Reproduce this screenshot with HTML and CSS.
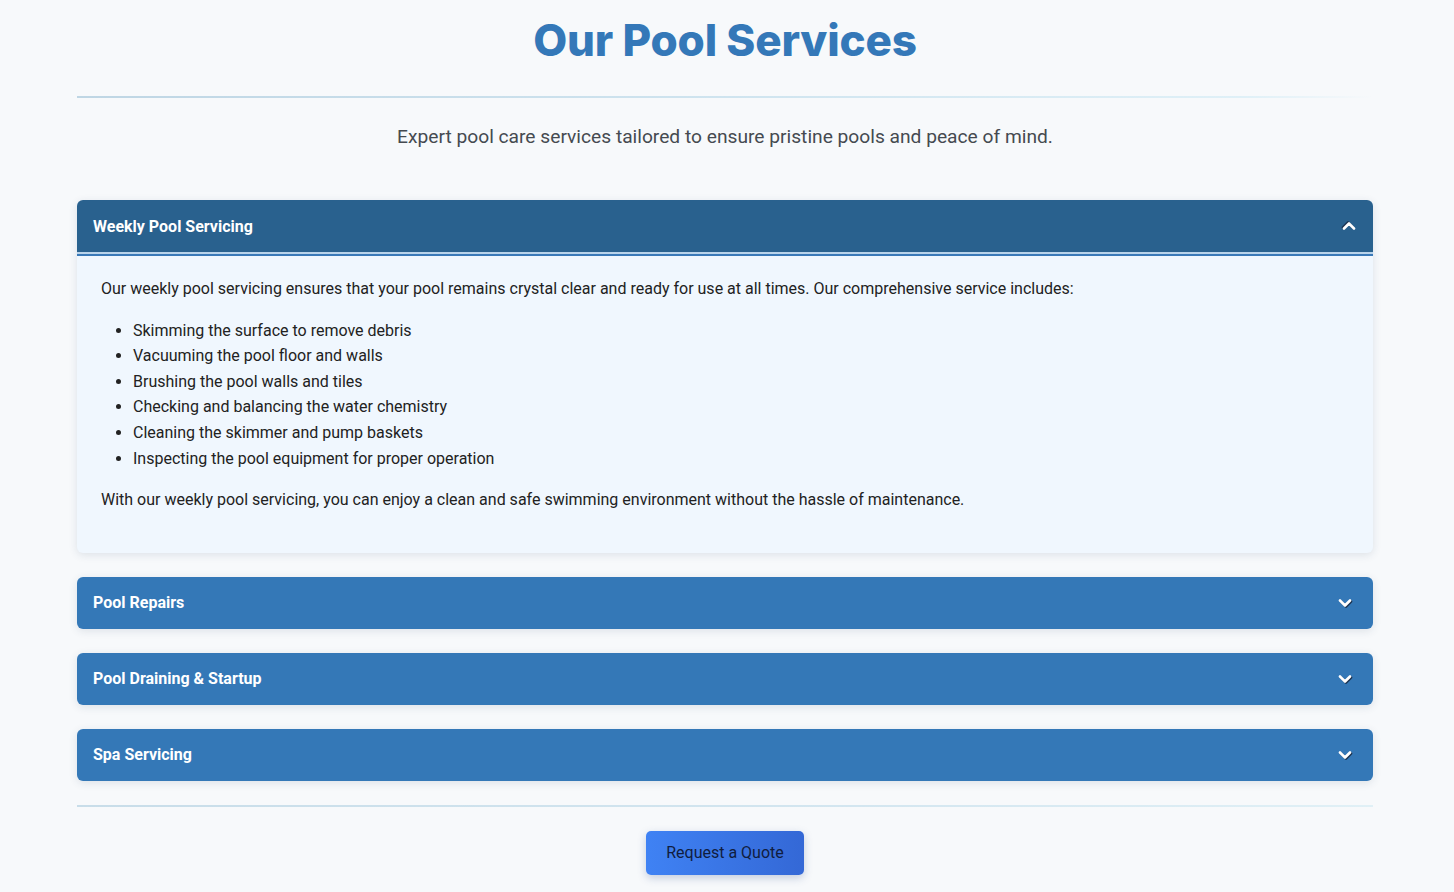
FILE: index.html
```html
<!DOCTYPE html>
<html lang="en">
<head>
<meta charset="utf-8">
<title>Our Pool Services</title>
<link rel="stylesheet" href="styles.css">
</head>
<body>
<main class="services">
  <h1 class="services-title">Our Pool Services</h1>
  <hr class="divider">
  <p class="services-intro">Expert pool care services tailored to ensure pristine pools and peace of mind.</p>

  <div class="accordion">
    <section class="acc-item open">
      <button class="acc-header" type="button">
        <span class="acc-label">Weekly Pool Servicing</span>
        <span class="acc-chevron"><svg viewBox="0 0 16 16" width="16" height="16"><path d="M3 5.5 L8 10.5 L13 5.5" fill="none" stroke="currentColor" stroke-width="2.6" stroke-linecap="round" stroke-linejoin="round"/></svg></span>
      </button>
      <div class="acc-body">
        <p>Our weekly pool servicing ensures that your pool remains crystal clear and ready for use at all times. Our comprehensive service includes:</p>
        <ul>
          <li>Skimming the surface to remove debris</li>
          <li>Vacuuming the pool floor and walls</li>
          <li>Brushing the pool walls and tiles</li>
          <li>Checking and balancing the water chemistry</li>
          <li>Cleaning the skimmer and pump baskets</li>
          <li>Inspecting the pool equipment for proper operation</li>
        </ul>
        <p>With our weekly pool servicing, you can enjoy a clean and safe swimming environment without the hassle of maintenance.</p>
      </div>
    </section>

    <section class="acc-item">
      <button class="acc-header" type="button">
        <span class="acc-label">Pool Repairs</span>
        <span class="acc-chevron"><svg viewBox="0 0 16 16" width="16" height="16"><path d="M3 5.5 L8 10.5 L13 5.5" fill="none" stroke="currentColor" stroke-width="2.6" stroke-linecap="round" stroke-linejoin="round"/></svg></span>
      </button>
    </section>

    <section class="acc-item">
      <button class="acc-header" type="button">
        <span class="acc-label">Pool Draining &amp; Startup</span>
        <span class="acc-chevron"><svg viewBox="0 0 16 16" width="16" height="16"><path d="M3 5.5 L8 10.5 L13 5.5" fill="none" stroke="currentColor" stroke-width="2.6" stroke-linecap="round" stroke-linejoin="round"/></svg></span>
      </button>
    </section>

    <section class="acc-item">
      <button class="acc-header" type="button">
        <span class="acc-label">Spa Servicing</span>
        <span class="acc-chevron"><svg viewBox="0 0 16 16" width="16" height="16"><path d="M3 5.5 L8 10.5 L13 5.5" fill="none" stroke="currentColor" stroke-width="2.6" stroke-linecap="round" stroke-linejoin="round"/></svg></span>
      </button>
    </section>
  </div>

  <hr class="divider divider-bottom">

  <div class="cta">
    <a class="cta-button" href="#quote">Request a Quote</a>
  </div>
</main>
</body>
</html>
```

FILE: styles.css
```css
* { box-sizing: border-box; }

html, body {
  margin: 0;
  padding: 0;
  background: #f7f9fb;
}

body {
  font-family: Roboto, "Liberation Sans", Arial, sans-serif;
  color: #222;
}

.services {
  max-width: 1300px;
  margin: 0 auto;
  padding: 0 4px 16px 0;
}

.services-title {
  margin: 0;
  padding-top: 14px;
  text-align: center;
  font-family: Inter, "DejaVu Sans", sans-serif;
  font-weight: 800;
  font-size: 44px;
  line-height: 52px;
  letter-spacing: -0.2px;
  color: #3478b8;
}

.divider {
  border: 0;
  height: 2px;
  margin: 30px 0 0;
  background: linear-gradient(90deg, #bfd6e4 0%, #cfe4ef 50%, #dff0f7 90%, rgba(230, 245, 250, 0) 100%);
}

.services-intro {
  margin: 25px 0 0;
  text-align: center;
  font-size: 19.2px;
  line-height: 28px;
  color: #454a50;
}

.accordion {
  display: flex;
  flex-direction: column;
  gap: 24px;
  margin-top: 49px;
}

.acc-item {
  border-radius: 6px;
  box-shadow: 0 2px 8px rgba(30, 60, 90, 0.12);
  background: #f0f7fe;
  overflow: hidden;
}

.acc-header {
  display: flex;
  align-items: center;
  justify-content: space-between;
  width: 100%;
  height: 52px;
  padding: 0 20px 0 16px;
  border: 0;
  background: #3478b7;
  color: #fff;
  font-family: Roboto, "Liberation Sans", Arial, sans-serif;
  font-weight: 700;
  font-size: 16px;
  cursor: pointer;
  text-align: left;
}

.acc-chevron {
  display: flex;
  width: 16px;
  height: 16px;
  color: #fff;
}

.acc-chevron svg {
  filter: drop-shadow(1.5px 1px 0 #1c3350);
}

.acc-item.open .acc-header {
  background: #29618e;
  height: 56px;
  padding-bottom: 2px;
  border-bottom: 2px solid #3a79b8;
  box-shadow: inset 0 -2px 0 #b9d3ea;
  padding-right: 16px;
}

.acc-item.open .acc-chevron {
  transform: rotate(180deg);
}

.acc-body {
  padding: 20px 24px 24px;
  font-size: 16px;
  line-height: 25.6px;
  color: #222;
}

.acc-body p {
  margin: 0 0 16px;
}

.acc-body ul {
  margin: 0 0 16px;
  padding-left: 32px;
}

.divider-bottom {
  margin-top: 24px;
  background: linear-gradient(90deg, #c8dde9 0%, #d3e6f0 60%, #e0f0f6 100%);
}

.cta {
  display: flex;
  justify-content: center;
  margin-top: 24px;
}

.cta-button {
  display: inline-flex;
  align-items: center;
  justify-content: center;
  width: 158px;
  height: 44px;
  border-radius: 5px;
  background: linear-gradient(90deg, #3f82f4 0%, #3468d6 100%);
  color: #101d40;
  text-decoration: none;
  font-size: 16px;
  box-shadow: 0 3px 8px rgba(40, 70, 140, 0.25);
}
```
